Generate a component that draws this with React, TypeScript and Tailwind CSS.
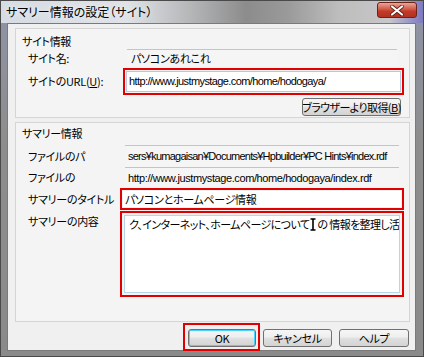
import React from "react"

function Field({ children, className = "" }: { children: React.ReactNode; className?: string }) {
  return (
    <div className={`flex items-center h-full border-t border-[#c4c4c4] bg-[#f5f5f5] whitespace-nowrap overflow-hidden ${className}`}>
      {children}
    </div>
  )
}

function WinButton({ children, className = "" }: { children: React.ReactNode; className?: string }) {
  return (
    <div
      className={`flex items-center justify-center h-[18px] whitespace-nowrap rounded-[3px] border border-[#707070] bg-[linear-gradient(180deg,#f6f6f6_0%,#eeeeee_45%,#e0e0e0_50%,#d3d3d3_100%)] ${className}`}
    >
      {children}
    </div>
  )
}

const latin = "font-['Liberation_Sans',sans-serif] text-[11px]"

export default function App() {
  return (
    <div className="w-[424px] h-[357px] flex flex-col bg-[linear-gradient(180deg,#8f93a8_0%,#8d8d8d_40%,#8a8a8a_100%)] border border-[#4a4a4a] font-['Noto_Sans_CJK_JP',sans-serif] text-[11px] tracking-[-0.3px] text-black [font-feature-settings:'palt'] overflow-hidden">
      {/* Title bar */}
      <div className="h-[22px] shrink-0 flex items-start justify-between pl-[5px] pr-[6px] bg-[linear-gradient(90deg,#d6dce4_0%,#dfe2e6_30%,#b4b6b8_45%,#8c8c8c_58%,#9a9a9a_68%,#bdbdbd_80%,#c7c7ca_92%,#7c7ac2_100%)]">
        <span className="text-[12px] tracking-[0px] leading-[22px] [text-shadow:0_0_6px_#fff]">サマリー情報の設定（サイト）</span>
        <div className="mt-[1px] w-[40px] h-[16px] rounded-[3px] border border-[#6b2219] bg-[linear-gradient(180deg,#e9a597_0%,#d3614f_40%,#c23a26_60%,#b23222_100%)] flex items-center justify-center">
          <svg width="14" height="11" viewBox="0 0 14 11">
            <path d="M2 1.5 L12 9.5 M12 1.5 L2 9.5" stroke="#5a1a12" strokeWidth="3.6" strokeLinecap="round" />
            <path d="M2 1.5 L12 9.5 M12 1.5 L2 9.5" stroke="#ffffff" strokeWidth="2.2" strokeLinecap="round" />
          </svg>
        </div>
      </div>

      {/* Frame + client */}
      <div className="flex-1 flex pl-[6px] pr-[7px] pb-[5px]">
        <div className="flex-1 flex flex-col bg-[#f0f0f0] border border-[#7a7a7a] pl-[7px] pr-[5px] pt-[4px]">
          {/* サイト情報 */}
          <div className="h-[90px] shrink-0 flex flex-col border border-[#d5d5d5] bg-[#f4f4f4]">
            <div className="h-[16px] mt-[4px] pl-[6px] leading-[16px]">サイト情報</div>
            <div className="h-[18px] flex items-center pl-[12px]">
              <div className="w-[99px] whitespace-nowrap">サイト名:</div>
              <Field className="w-[270px] pl-[4px]">パソコンあれこれ</Field>
            </div>
            <div className="h-[27px] mt-[1px] flex items-center pl-[12px]">
              <div className="w-[95px] whitespace-nowrap">
                サイトのURL(<span className="underline">U</span>):
              </div>
              <div className="w-[281px] h-full border-2 border-[#e00000] p-px">
                <div className={`h-full flex items-center bg-white border border-[#b7c9dc] pl-[2px] whitespace-nowrap overflow-hidden tracking-[-0.6px] ${latin}`}>
                  http://www.justmystage.com/home/hodogaya/
                </div>
              </div>
            </div>
            <div className="flex justify-end mt-[3px] pr-[8px]">
              <WinButton className="w-[99px] h-[17px] tracking-[-0.6px]">
                ブラウザーより取得(<span className="underline">B</span>)
              </WinButton>
            </div>
          </div>

          {/* サマリー情報 */}
          <div className="h-[200px] shrink-0 mt-[4px] flex flex-col border border-[#d5d5d5] bg-[#f4f4f4]">
            <div className="h-[16px] mt-[2px] pl-[6px] leading-[16px]">サマリー情報</div>
            <div className="h-[22px] mt-[4px] flex items-center pl-[12px]">
              <div className="w-[97px] whitespace-nowrap">ファイルのパ</div>
              <Field className={`w-[274px] pl-[3px] tracking-[-0.75px] ${latin}`}>
                sers¥kumagaisan¥Documents¥Hpbuilder¥PC Hints¥index.rdf
              </Field>
            </div>
            <div className="h-[21px] flex items-center pl-[12px]">
              <div className="w-[97px] whitespace-nowrap">ファイルの</div>
              <Field className={`w-[274px] pl-[3px] tracking-[-0.4px] ${latin}`}>
                http://www.justmystage.com/home/hodogaya/index.rdf
              </Field>
            </div>
            <div className="h-[22px] flex items-center pl-[12px]">
              <div className="w-[92px] whitespace-nowrap">サマリーのタイトル</div>
              <div className="w-[284px] h-full border-2 border-[#e00000] p-px">
                <div className="h-full flex items-center bg-white pl-[2px] whitespace-nowrap overflow-hidden">
                  パソコンとホームページ情報
                </div>
              </div>
            </div>
            <div className="h-[86px] mt-px flex items-start pl-[12px]">
              <div className="w-[92px] mt-[3px] leading-[14px] whitespace-nowrap">サマリーの内容</div>
              <div className="w-[284px] h-full border-2 border-[#e00000] p-[2px]">
                <div className="h-full bg-white border border-[#b9d3ea] pl-[4px] pt-px leading-[14px] whitespace-nowrap overflow-hidden tracking-[-0.6px]">
                  ク、インターネット、ホームページについて
                  <svg width="6" height="13" viewBox="0 0 6 13" className="inline-block align-[-2px] mx-px">
                    <path d="M0.5 1 H5.5 M3 1 V12 M0.5 12 H5.5" stroke="#000" strokeWidth="1.6" fill="none" />
                  </svg>
                  の 情報を整理し活用
                </div>
              </div>
            </div>
          </div>

          {/* Buttons */}
          <div className="flex justify-end items-center gap-[7px] mt-[7px] pr-[1px]">
            <div className="relative">
              <WinButton className="w-[68px] border-[#3c7fb1] shadow-[inset_0_0_0_1px_#48d2ff]">OK</WinButton>
              <span className="absolute left-[-5px] right-[-4px] top-[-6px] bottom-[-4px] border-2 border-[#e00000]" />
            </div>
            <WinButton className="w-[69px]">キャンセル</WinButton>
            <WinButton className="w-[70px]">ヘルプ</WinButton>
          </div>
        </div>
      </div>
    </div>
  )
}
